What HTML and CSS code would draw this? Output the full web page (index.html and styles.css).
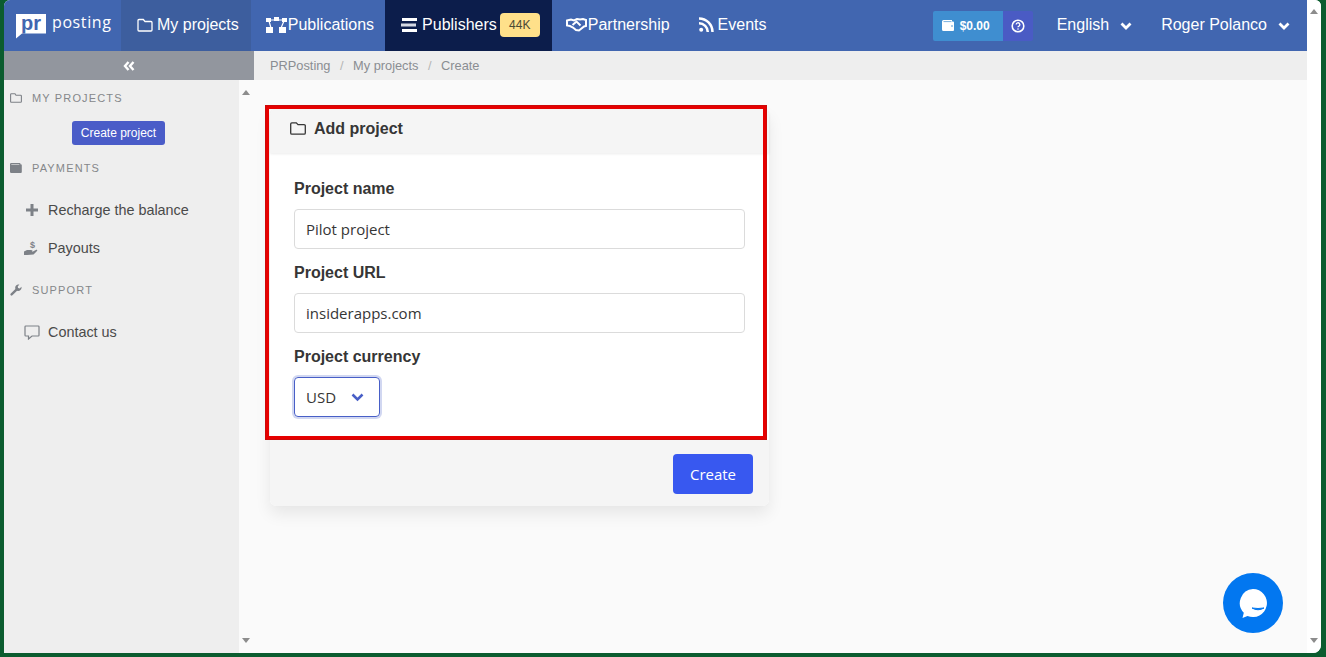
FILE: index.html
```html
<!DOCTYPE html>
<html lang="en">
<head>
    <meta charset="UTF-8">
    <title>Add project - PRPosting</title>
    <link rel="stylesheet" href="styles.css">
</head>
<body>
<div class="window">
    <div class="page">
        <nav class="topbar">
            <a class="logo"><span class="logo-box">pr</span><span class="logo-text">posting</span></a>
            <a class="nav-item nav-active">
                <svg class="ico" width="16" height="14" viewBox="0 0 16 14"><path d="M1 3v9a1 1 0 0 0 1 1h12a1 1 0 0 0 1-1V4.500a1 1 0 0 0-1-1H8L6.300 1.500H2A1 1 0 0 0 1 2.500z" fill="none" stroke="#fff" stroke-width="1.300"/></svg>
                My projects
            </a>
            <a class="nav-item nav-pub">
                <svg width="23" height="16" viewBox="0 0 23 16"><g fill="#fff"><rect x="1" y="1" width="5" height="4"/><rect x="17" y="1" width="5" height="4"/><rect x="9" y="0" width="5" height="4"/><rect x="1" y="10" width="7" height="6"/><rect x="14" y="10" width="7" height="6"/></g><path d="M5 3h13M4 4l2 7M19 4l-3 7" stroke="#fff" stroke-width="1.200"/></svg>
                Publications
            </a>
            <a class="nav-item nav-dark">
                <svg class="ico" width="16" height="14" viewBox="0 0 16 14"><rect x="1" y="0" width="15" height="3" fill="#fff"/><rect x="0" y="5.500" width="15" height="3" fill="#d5d9e4"/><rect x="1" y="11" width="15" height="3" fill="#fff"/></svg>
                Publishers
                <span class="count">44K</span>
            </a>
            <a class="nav-item nav-part">
                <svg width="21" height="14" viewBox="0 0 21 14"><path d="M1 2.500l4-1 3 1 3-1.500 3 .5 3-.5 3 1v6l-2 .5-5 4-3-.5-3-2.500-3-1.500-3-.5z" fill="none" stroke="#fff" stroke-width="2"/><path d="M6.500 7l4-3.500 4 4" fill="none" stroke="#fff" stroke-width="2"/></svg>
                Partnership
            </a>
            <a class="nav-item nav-events">
                <svg class="ico" width="15" height="15" viewBox="0 0 15 15"><circle cx="2.200" cy="12.800" r="2" fill="#fff"/><path d="M0 6.200a8.800 8.800 0 0 1 8.800 8.800M0 1.500A13.500 13.500 0 0 1 13.500 15" fill="none" stroke="#fff" stroke-width="2.500"/></svg>
                Events
            </a>
            <div class="topbar-right">
                <a class="balance">
                    <svg width="12" height="11" viewBox="0 0 12 11"><path d="M1.500 0H10v1.500h1a1 1 0 0 1 1 1V10a1 1 0 0 1-1 1H1.500A1.500 1.500 0 0 1 0 9.500v-8A1.500 1.500 0 0 1 1.500 0z" fill="#fff"/><path d="M1.500 1.600h8" stroke="#3f8ed0" stroke-width=".7"/><circle cx="10" cy="6" r=".8" fill="#3f8ed0"/></svg>
                    $0.00
                </a>
                <a class="help">
                    <svg width="14" height="14" viewBox="0 0 14 14"><circle cx="7" cy="7" r="5.800" fill="none" stroke="#fff" stroke-width="1.600"/><path d="M5.200 5.600a1.800 1.800 0 1 1 2.700 1.500c-.6.300-.9.600-.9 1.100" fill="none" stroke="#fff" stroke-width="1.300"/><circle cx="7" cy="10" r=".8" fill="#fff"/></svg>
                </a>
                <a class="drop drop-lang">English
                    <svg class="chev" width="12" height="8" viewBox="0 0 12 8"><path d="M1.500 1.500L6 6l4.500-4.500" fill="none" stroke="#fff" stroke-width="2.800"/></svg>
                </a>
                <a class="drop">Roger Polanco
                    <svg class="chev" width="12" height="8" viewBox="0 0 12 8"><path d="M1.500 1.500L6 6l4.500-4.500" fill="none" stroke="#fff" stroke-width="2.800"/></svg>
                </a>
            </div>
        </nav>

        <div class="below">
            <aside class="sidebar">
                <div class="collapse">
                    <svg width="12" height="10" viewBox="0 0 12 10"><path d="M5.500 1L2 5l3.500 4M10.500 1L7 5l3.500 4" fill="none" stroke="#fff" stroke-width="2.400"/></svg>
                </div>
                <div class="side-body">
                    <div class="side-menu">
                        <div class="side-head">
                            <svg width="12" height="10" viewBox="0 0 12 10"><path d="M.6 1.500v7a.8.8 0 0 0 .8.8h9.200a.8.8 0 0 0 .8-.8V3a.8.8 0 0 0-.8-.8H6L5 .7H1.400a.8.8 0 0 0-.8.8z" fill="none" stroke="#7d8187" stroke-width="1.100"/></svg>
                            <span>MY PROJECTS</span>
                        </div>
                        <div class="side-action"><a class="btn-small">Create project</a></div>
                        <div class="side-head head-pay">
                            <svg width="12" height="10" viewBox="0 0 12 10"><path d="M1.300 0h9v1.200h.5a1 1 0 0 1 1 1V9a1 1 0 0 1-1 1H1.300A1.300 1.300 0 0 1 0 8.700V1.300A1.300 1.300 0 0 1 1.300 0z" fill="#7d8187"/><path d="M1.300 1.500h8" stroke="#eeeeee" stroke-width=".6"/></svg>
                            <span>PAYMENTS</span>
                        </div>
                        <a class="side-link link-first">
                            <svg width="16" height="14" viewBox="0 0 16 14"><path d="M8 1v12M2 7h12" stroke="#7d8187" stroke-width="3"/></svg>
                            Recharge the balance
                        </a>
                        <a class="side-link">
                            <svg width="16" height="16" viewBox="0 0 16 16"><path d="M0 11.500l3-1.500h4l1.500.5-.3 1.200H5.500h3l3.300-1.700c1.200-.5 2 .4 1.200 1.100L9.500 14.500 3 15H0z" fill="#7d8187"/><text x="8.500" y="7.500" font-size="9" font-weight="bold" font-family="Liberation Sans" fill="#7d8187" text-anchor="middle">$</text></svg>
                            Payouts
                        </a>
                        <div class="side-head head-sup">
                            <svg width="12" height="12" viewBox="0 0 12 12"><path d="M.8 9.600l4.600-4.700a3.300 3.300 0 0 1 4-4.300L7.700 2.400l.4 1.600 1.600.4 1.700-1.700a3.300 3.300 0 0 1-4.300 4L2.400 11.300a1.100 1.100 0 0 1-1.600-1.700z" fill="#7d8187"/></svg>
                            <span>SUPPORT</span>
                        </div>
                        <a class="side-link link-first">
                            <svg width="16" height="15" viewBox="0 0 16 15"><path d="M1.800 1h12.400a.8.8 0 0 1 .8.800v8.400a.8.8 0 0 1-.8.800H8l-3.500 3v-3H1.800a.8.8 0 0 1-.8-.8V1.800a.8.8 0 0 1 .8-.8z" fill="none" stroke="#7d8187" stroke-width="1.200"/></svg>
                            Contact us
                        </a>
                    </div>
                    <div class="side-scroll">
                        <span class="arrow-up"></span>
                        <span class="arrow-down"></span>
                    </div>
                </div>
            </aside>

            <main class="main">
                <div class="breadcrumb">
                    <a>PRPosting</a><span class="sep">/</span><a>My projects</a><span class="sep">/</span><a>Create</a>
                </div>
                <div class="content">
                    <div class="card">
                        <div class="marker"></div>
                        <header class="card-head">
                            <svg width="16" height="13" viewBox="0 0 16 13"><path d="M.7 2v9a1.200 1.200 0 0 0 1.200 1.200h12.200a1.200 1.200 0 0 0 1.200-1.200V3.800a1.200 1.200 0 0 0-1.200-1.200H8L6.300.8H1.900A1.200 1.200 0 0 0 .7 2z" fill="none" stroke="#363636" stroke-width="1.300"/></svg>
                            Add project
                        </header>
                        <div class="card-body">
                            <label class="field-label">Project name</label>
                            <input class="field-input" type="text" value="Pilot project">
                            <label class="field-label">Project URL</label>
                            <input class="field-input" type="text" value="insiderapps.com">
                            <label class="field-label">Project currency</label>
                            <div class="select">USD
                                <svg width="13" height="9" viewBox="0 0 13 9"><path d="M1.500 1.500l5 5 5-5" fill="none" stroke="#485fc7" stroke-width="2.500"/></svg>
                            </div>
                        </div>
                        <footer class="card-foot">
                            <button class="btn-create">Create</button>
                        </footer>
                    </div>
                    <a class="chat">
                        <svg width="34" height="34" viewBox="0 0 34 34"><path d="M17 3a14 14 0 1 1-5.500 26.900L6.500 32l1.300-5.300A14 14 0 0 1 17 3z" fill="#fff"/><path d="M16 22q6 3.500 12 0q-6 1-12 0z" fill="#0277f0" stroke="#0277f0"/></svg>
                    </a>
                </div>
            </main>
        </div>
    </div>
    <div class="page-scroll">
        <span class="arrow-up"></span>
        <span class="arrow-down"></span>
    </div>
</div>
</body>
</html>
```

FILE: styles.css
```css
html, body {
    margin: 0;
    height: 100%;
    overflow: hidden;
}
body {
    background: #0b5c2f;
    font-family: "Liberation Sans", Arial, sans-serif;
    color: #363636;
    padding: 0 5px 4px 4px;
    box-sizing: border-box;
}
.window {
    display: flex;
    height: 100%;
    background: #fafafa;
    border-radius: 6px 6px 8px 0;
    overflow: hidden;
}
.page {
    flex: 1;
    display: flex;
    flex-direction: column;
    min-width: 0;
}
.page-scroll, .side-scroll {
    position: relative;
    width: 15px;
    flex: none;
    background: #fff;
}
.page-scroll {
    width: 14px;
}
.arrow-up, .arrow-down {
    position: absolute;
    left: 3px;
    width: 0;
    height: 0;
    border-left: 4.5px solid transparent;
    border-right: 4.5px solid transparent;
}
.arrow-up {
    top: 9px;
    border-bottom: 5px solid #8c8c8c;
}
.arrow-down {
    bottom: 10px;
    border-top: 5px solid #8c8c8c;
}
.side-scroll {
    background: #fafafa;
}
.side-scroll .arrow-up {
    top: 10px;
}

/* top bar */
.topbar {
    display: flex;
    align-items: stretch;
    height: 51px;
    flex: none;
    background: #4166b0;
    color: #fff;
    font-size: 16px;
}
.logo {
    display: flex;
    align-items: center;
    width: 117px;
    box-sizing: border-box;
    padding: 0 0 4px 12px;
}
.logo-box {
    width: 30px;
    height: 25px;
    margin-top: 5px;
    background: #fff;
    color: #4166b0;
    font-size: 20px;
    font-weight: bold;
    line-height: 19px;
    text-align: center;
    clip-path: polygon(0 0, 100% 0, 100% 80%, 20% 80%, 0 100%);
}
.logo-text {
    margin: 0 0 4px 6px;
    font-family: "Open Sans", sans-serif;
    font-size: 16px;
    letter-spacing: 0.6px;
}
.nav-item {
    display: flex;
    align-items: center;
    padding: 0 12px 2px 16px;
    white-space: nowrap;
}
.nav-item .ico {
    margin-right: 4px;
}
.nav-active {
    background: #3d5e9e;
}
.nav-pub {
    padding-left: 14px;
    padding-right: 11px;
}
.nav-dark {
    background: #0c1d4b;
    padding-right: 12px;
}
.nav-dark .ico {
    margin-right: 5px;
}
.count {
    margin-left: 3px;
    width: 40px;
    height: 24px;
    border-radius: 4px;
    background: #ffe08a;
    color: #4a4a35;
    font-size: 12px;
    line-height: 24px;
    text-align: center;
}
.nav-part {
    padding-left: 14px;
}
.nav-part svg {
    margin-right: 1px;
}
.nav-events {
    padding-left: 17px;
}
.topbar-right {
    display: flex;
    align-items: center;
    margin-left: auto;
}
.balance {
    display: flex;
    align-items: center;
    gap: 6px;
    width: 70px;
    height: 30px;
    box-sizing: border-box;
    padding-left: 9px;
    background: #3f8ed0;
    border-radius: 2px 0 0 2px;
    font-size: 12px;
    font-weight: bold;
}
.help {
    display: flex;
    align-items: center;
    justify-content: center;
    width: 30px;
    height: 30px;
    background: #4a5bc4;
    border-radius: 0 2px 2px 0;
}
.drop {
    display: flex;
    align-items: center;
    padding: 0 17px 2px 0;
    white-space: nowrap;
}
.drop-lang {
    margin-left: 24px;
    margin-right: 12px;
}
.chev {
    margin-left: 11px;
    margin-top: 3px;
}

/* sidebar */
.below {
    flex: 1;
    display: flex;
    min-height: 0;
}
.sidebar {
    width: 250px;
    flex: none;
    display: flex;
    flex-direction: column;
}
.collapse {
    display: flex;
    align-items: center;
    justify-content: center;
    height: 29px;
    flex: none;
    background: #92969e;
}
.side-body {
    flex: 1;
    display: flex;
    min-height: 0;
}
.side-menu {
    flex: 1;
    background: #eeeeee;
    padding-top: 11px;
}
.side-head {
    display: flex;
    align-items: center;
    height: 14px;
    padding-left: 6px;
    font-size: 11px;
    letter-spacing: 1.15px;
    color: #85878a;
}
.side-head span {
    margin-left: 10px;
}
.side-action {
    display: flex;
    justify-content: center;
    margin-top: 16px;
    padding-right: 6px;
}
.btn-small {
    padding: 0 9px;
    height: 24px;
    line-height: 24px;
    border-radius: 3px;
    background: #4a5cc8;
    color: #fff;
    font-size: 12px;
}
.head-pay {
    margin-top: 16px;
}
.head-sup {
    margin-top: 23px;
}
.side-link {
    display: flex;
    align-items: center;
    gap: 8px;
    height: 24px;
    margin-top: 14px;
    padding-left: 20px;
    font-size: 14.4px;
    color: #4a4a4a;
}
.side-link.link-first {
    margin-top: 23px;
}
.side-link + .side-link {
    margin-top: 14px;
}

/* main column */
.main {
    flex: 1;
    display: flex;
    flex-direction: column;
    min-width: 0;
}
.breadcrumb {
    height: 29px;
    flex: none;
    display: flex;
    align-items: center;
    padding-left: 16px;
    background: #eeeeee;
    font-size: 12.8px;
    color: #8a8d92;
}
.sep {
    margin: 0 9.500px;
    color: #b5b5b5;
}
.content {
    position: relative;
    flex: 1;
    padding: 29px 0 0 16px;
}
.card {
    position: relative;
    width: 499px;
    border-radius: 6px;
    background: #fff;
    box-shadow: 0 8px 16px rgba(10, 10, 10, 0.08), 0 0 1px rgba(10, 10, 10, 0.04);
}
.marker {
    position: absolute;
    left: -5px;
    top: -4px;
    width: 494px;
    height: 327px;
    border: 4px solid #e60000;
    outline: 1px solid rgba(60, 60, 60, 0.15);
    outline-offset: -1px;
    pointer-events: none;
}
.card-head {
    display: flex;
    align-items: center;
    gap: 8px;
    height: 44px;
    padding: 0 0 5px 20px;
    box-sizing: border-box;
    background: #f5f5f5;
    box-shadow: 0 1px 3px rgba(10, 10, 10, 0.08);
    font-size: 16px;
    font-weight: bold;
    border-radius: 6px 6px 0 0;
}
.card-body {
    padding: 26px 24px 22px 24px;
    height: 287px;
    box-sizing: border-box;
}
.field-label {
    display: block;
    font-size: 16px;
    font-weight: bold;
    line-height: 19px;
    margin-bottom: 11px;
}
.field-input {
    display: block;
    box-sizing: border-box;
    width: 451px;
    height: 40px;
    margin-bottom: 14px;
    padding: 0 11px;
    border: 1px solid #dbdbdb;
    border-radius: 4px;
    background: #fff;
    color: #363636;
    font-family: "Open Sans", sans-serif;
    font-size: 15px;
}
.select {
    display: flex;
    align-items: center;
    justify-content: space-between;
    box-sizing: border-box;
    width: 86px;
    height: 40px;
    padding: 0 15px 0 11px;
    border: 1px solid #485fc7;
    border-radius: 4px;
    box-shadow: 0 0 0 2px rgba(72, 95, 199, 0.25);
    font-family: "Open Sans", sans-serif;
    font-size: 15px;
}
.card-foot {
    display: flex;
    justify-content: flex-end;
    align-items: center;
    height: 66px;
    box-sizing: border-box;
    padding: 2px 16px 0 0;
    background: #f5f5f5;
    border-radius: 0 0 6px 6px;
}
.btn-create {
    width: 80px;
    height: 40px;
    border: none;
    border-radius: 4px;
    background: #3858f0;
    color: #fff;
    font-family: "Open Sans", sans-serif;
    font-size: 15px;
}
.chat {
    position: absolute;
    right: 24px;
    bottom: 20px;
    width: 60px;
    height: 60px;
    border-radius: 50%;
    background: #0277f0;
    display: flex;
    align-items: center;
    justify-content: center;
}
```
